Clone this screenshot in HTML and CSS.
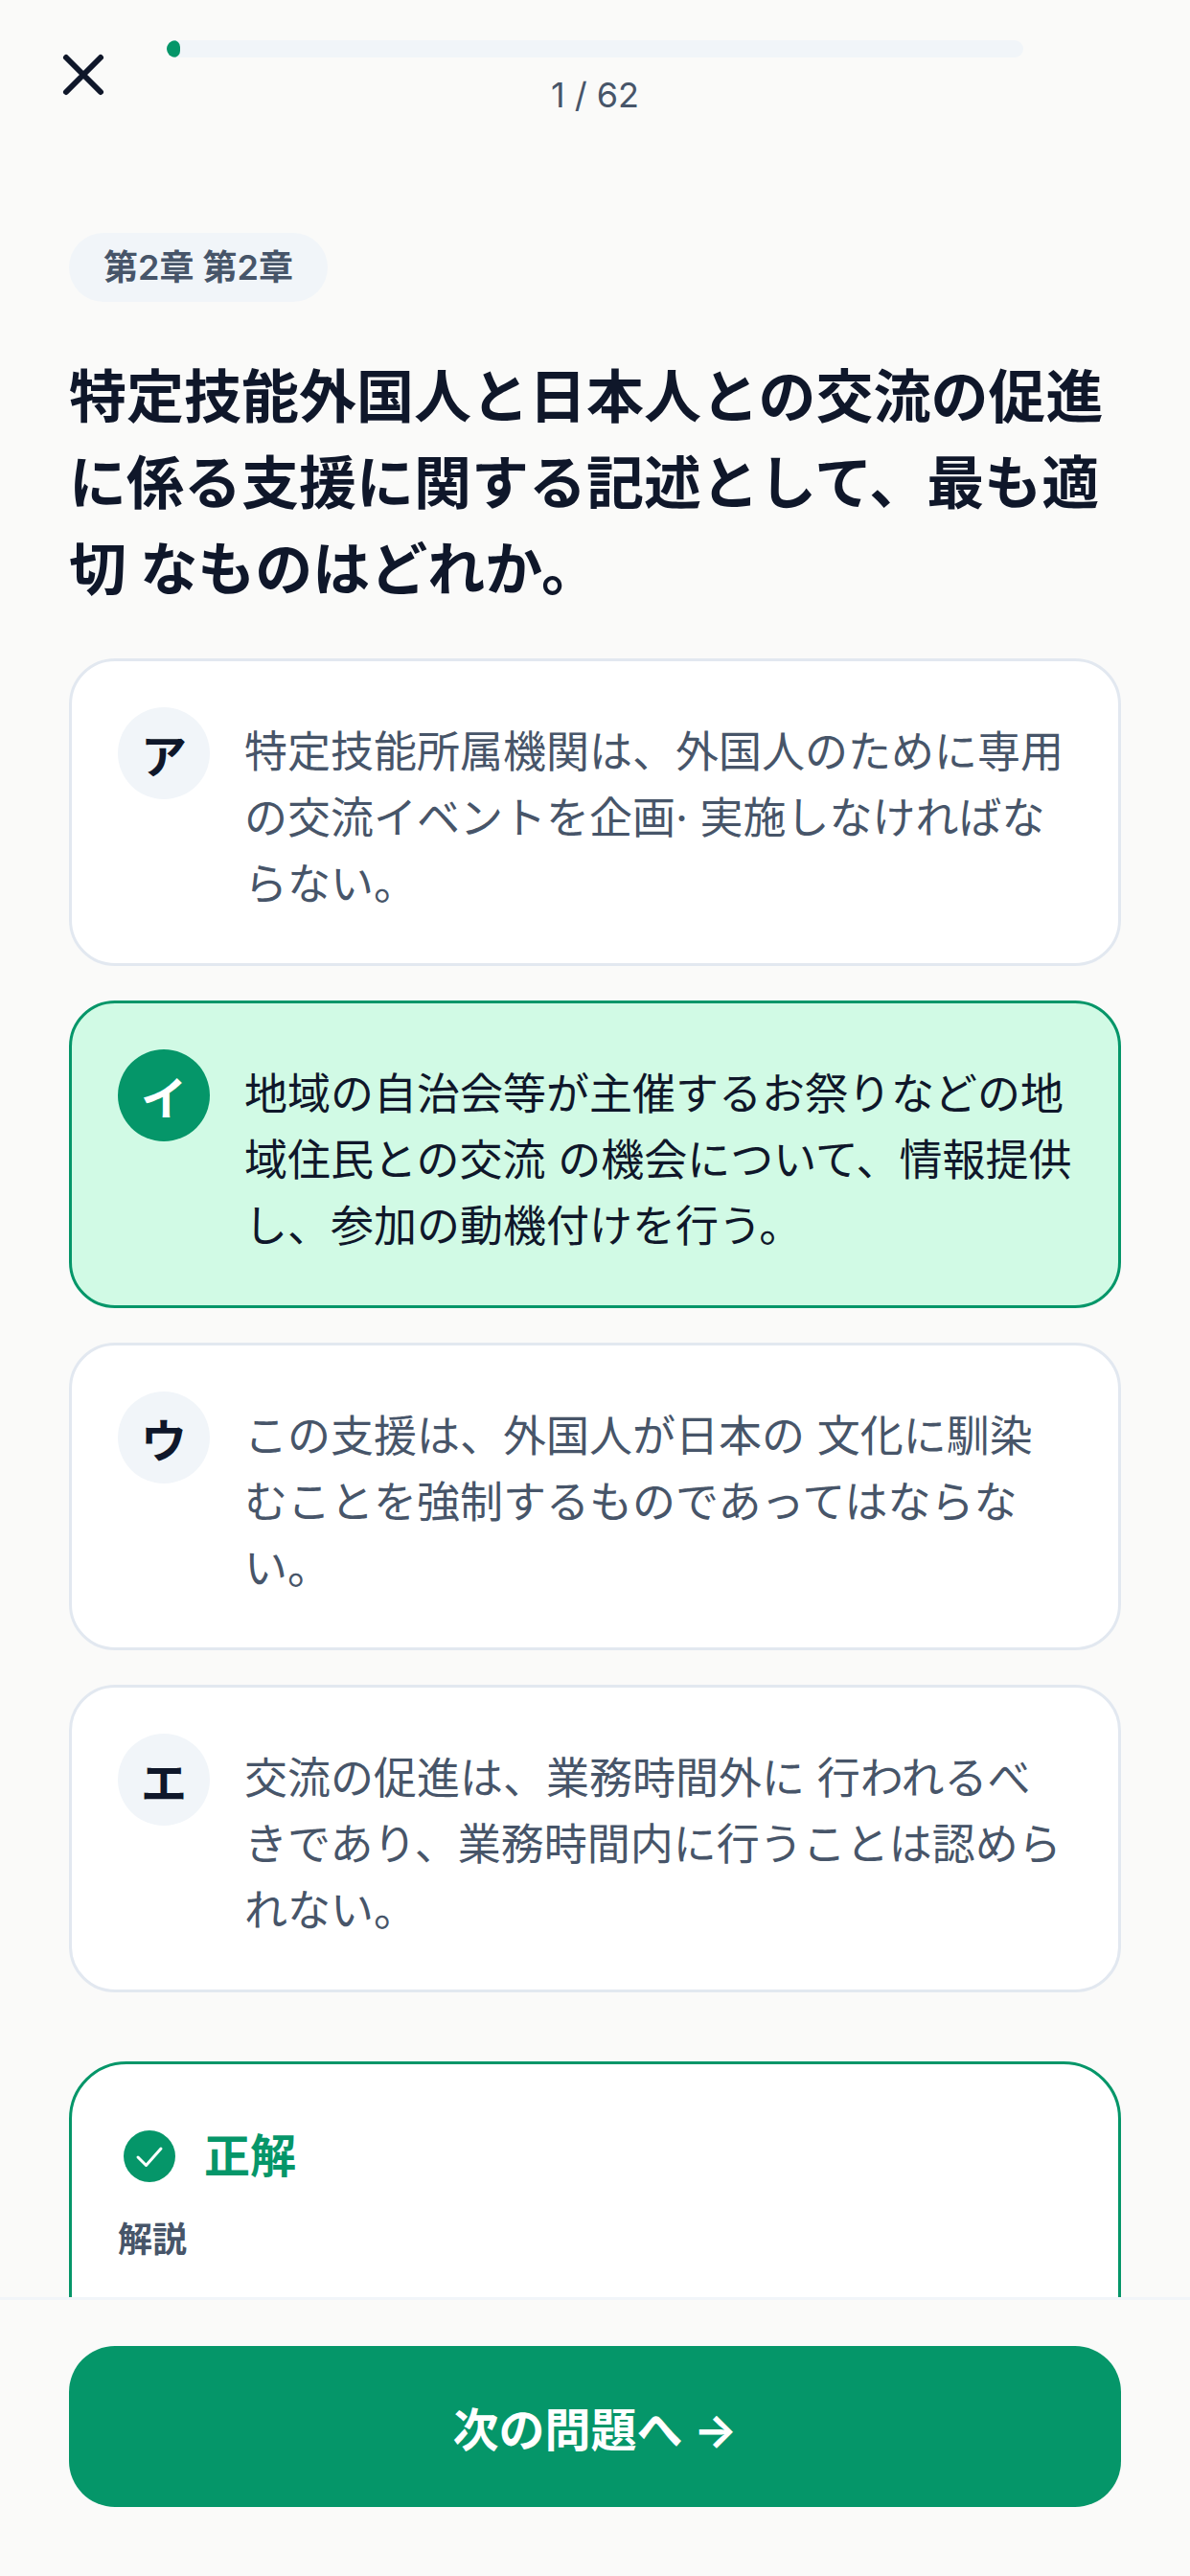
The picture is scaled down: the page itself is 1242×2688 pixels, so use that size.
FILE: index.html
```html
<!DOCTYPE html>
<html lang="ja">
<head>
<meta charset="utf-8">
<title>問題</title>
<link rel="stylesheet" href="styles.css">
</head>
<body>
<div class="page">
  <main class="scroll">
    <header class="top">
      <button class="close" aria-label="閉じる">
        <svg viewBox="0 0 24 24" class="close-icon"><path d="M18 6 6 18M6 6l12 12"/></svg>
      </button>
      <div class="progress-wrap">
        <div class="track"><div class="fill" style="width:1.61%"></div></div>
        <div class="count">1 / 62</div>
      </div>
    </header>
    <section class="content">
      <span class="chip">第2章 第2章</span>
      <h1 class="question">特定技能外国人と日本人との交流の促進に係る支援に関する記述として、最も適切 なものはどれか。</h1>
      <div class="options">
        <div class="option">
          <span class="badge">ア</span>
          <p class="option-text">特定技能所属機関は、外国人のために専用の交流イベントを企画· 実施しなければならない。</p>
        </div>
        <div class="option option-correct">
          <span class="badge">イ</span>
          <p class="option-text">地域の自治会等が主催するお祭りなどの地域住民との交流 の機会について、情報提供し、参加の動機付けを行う。</p>
        </div>
        <div class="option">
          <span class="badge">ウ</span>
          <p class="option-text">この支援は、外国人が日本の 文化に馴染むことを強制するものであってはならない。</p>
        </div>
        <div class="option">
          <span class="badge">エ</span>
          <p class="option-text">交流の促進は、業務時間外に 行われるべきであり、業務時間内に行うことは認められない。</p>
        </div>
      </div>
      <div class="result">
        <div class="result-head">
          <svg viewBox="0 0 54 54" class="check"><circle cx="27" cy="27" r="27"/><path d="M15 28l8.500 8.500L39 19"/></svg>
          <span class="result-title">正解</span>
        </div>
        <div class="result-label">解説</div>
      </div>
    </section>
  </main>
  <footer class="footer">
    <button class="next">次の問題へ →</button>
  </footer>
</div>
</body>
</html>
```
FILE: styles.css
```css
* { box-sizing: border-box; }
html, body { margin: 0; padding: 0; }
body {
  background: #fafaf9;
  font-family: Inter, "Noto Sans CJK JP", sans-serif;
  color: #0f172a;
}
.page {
  width: 1242px;
  height: 2688px;
  display: flex;
  flex-direction: column;
  overflow: hidden;
}
.scroll {
  flex: 1;
  min-height: 0;
  overflow: hidden;
}
.top {
  display: flex;
  align-items: flex-start;
  padding: 42px 174px 0 51px;
  gap: 51px;
}
.close {
  width: 72px;
  height: 72px;
  padding: 0;
  border: 0;
  background: none;
  flex: none;
}
.close-icon {
  display: block;
  width: 72px;
  height: 72px;
  fill: none;
  stroke: #0f172a;
  stroke-width: 2;
  stroke-linecap: round;
  stroke-linejoin: round;
}
.progress-wrap { flex: 1; }
.track {
  height: 18px;
  border-radius: 9px;
  background: #f1f5f9;
  overflow: hidden;
}
.fill {
  height: 100%;
  border-radius: 9px;
  background: #059669;
}
.count {
  margin-top: 12px;
  text-align: center;
  font-size: 36px;
  line-height: 54px;
  color: #475569;
}
.content { padding: 117px 72px 0; }
.chip {
  display: inline-block;
  height: 72px;
  padding: 0 36px;
  border-radius: 36px;
  background: #f1f5f9;
  font-size: 36px;
  line-height: 72px;
  font-weight: 600;
  color: #475569;
}
.question {
  margin: 54px 0 0;
  font-size: 60px;
  line-height: 90px;
  font-weight: 700;
  color: #0f172a;
}
.options {
  margin-top: 48px;
  display: flex;
  flex-direction: column;
  gap: 36px;
}
.option {
  display: flex;
  gap: 36px;
  padding: 48px;
  border: 3px solid #e2e8f0;
  border-radius: 48px;
  background: #fff;
}
.badge {
  flex: none;
  width: 96px;
  height: 96px;
  border-radius: 50%;
  background: #f1f5f9;
  display: flex;
  align-items: center;
  justify-content: center;
  font-size: 48px;
  font-weight: 700;
  color: #0f172a;
}
.option-text {
  margin: 0;
  padding-top: 12px;
  font-size: 45px;
  line-height: 69px;
  color: #475569;
}
.option-correct {
  background: #d1fae5;
  border-color: #059669;
}
.option-correct .badge {
  background: #059669;
  color: #fff;
}
.option-correct .option-text { color: #0f172a; }
.result {
  margin-top: 72px;
  padding: 60px 48px;
  height: 400px;
  border: 3px solid #059669;
  border-radius: 60px;
  background: #fff;
}
.result-head {
  display: flex;
  align-items: center;
  gap: 30px;
  padding-left: 6px;
}
.check {
  display: block;
  width: 54px;
  height: 54px;
  flex: none;
}
.check circle { fill: #059669; }
.check path {
  fill: none;
  stroke: #fff;
  stroke-width: 3;
  stroke-linecap: round;
  stroke-linejoin: round;
}
.result-title {
  font-size: 48px;
  line-height: 72px;
  font-weight: 700;
  color: #059669;
}
.result-label {
  margin-top: 24px;
  font-size: 36px;
  line-height: 54px;
  font-weight: 600;
  color: #475569;
}
.footer {
  flex: none;
  height: 291px;
  padding: 48px 72px 0;
  border-top: 3px solid #f1f5f9;
  background: #fafaf9;
}
.next {
  display: block;
  width: 100%;
  height: 168px;
  border: 0;
  border-radius: 48px;
  background: #059669;
  color: #fff;
  font-family: inherit;
  font-size: 48px;
  font-weight: 700;
}
```
